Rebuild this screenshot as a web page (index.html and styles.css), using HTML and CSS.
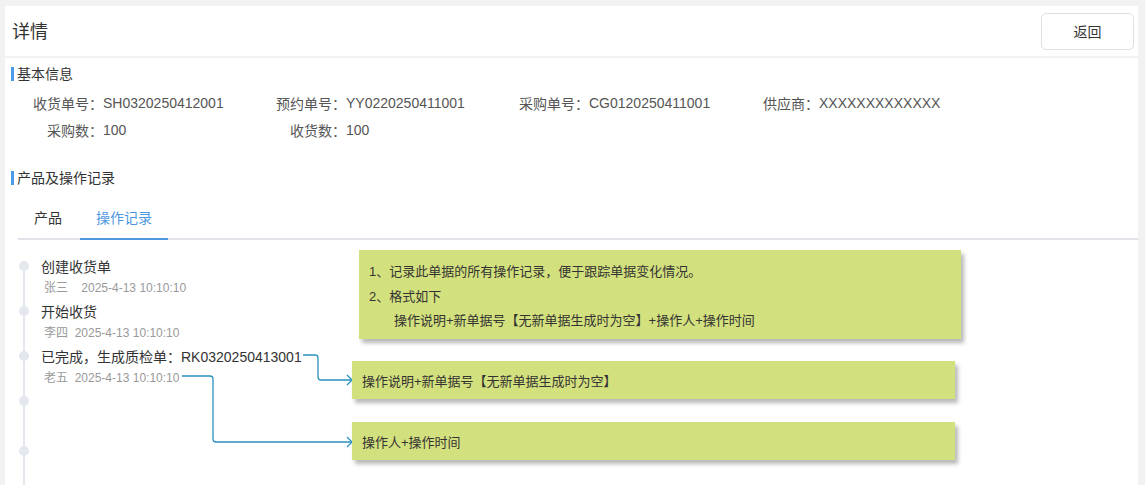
FILE: index.html
```html
<!DOCTYPE html>
<html lang="zh-CN">
<head>
    <meta charset="UTF-8">
    <title>收货单详情</title>
    <link rel="stylesheet" href="styles.css">
</head>
<body>
    <!-- Page Header -->
    <div class="page-head">
        <span class="page-title">详情</span>
        <button class="btn-back">返回</button>
    </div>

    <div class="page-body">
        <!-- Basic Info -->
        <div class="section-title">基本信息</div>
        <div class="info-grid">
            <div class="info-item"><span class="info-label">收货单号：</span>SH0320250412001</div>
            <div class="info-item"><span class="info-label">预约单号：</span>YY0220250411001</div>
            <div class="info-item"><span class="info-label">采购单号：</span>CG0120250411001</div>
            <div class="info-item info-last"><span class="info-label">供应商：</span>XXXXXXXXXXXXX</div>
            <div class="info-item"><span class="info-label">采购数：</span>100</div>
            <div class="info-item"><span class="info-label">收货数：</span>100</div>
        </div>

        <!-- Products and Records -->
        <div class="section-title section-second">产品及操作记录</div>
        <div class="tabs">
            <div class="tab">产品</div>
            <div class="tab tab-active">操作记录</div>
        </div>

        <div class="records">
            <div class="timeline">
                <div class="tl-item">
                    <div class="tl-title">创建收货单</div>
                    <div class="tl-sub">张三&nbsp;&nbsp;&nbsp;&nbsp;2025-4-13 10:10:10</div>
                </div>
                <div class="tl-item">
                    <div class="tl-title">开始收货</div>
                    <div class="tl-sub">李四&nbsp;&nbsp;2025-4-13 10:10:10</div>
                </div>
                <div class="tl-item">
                    <div class="tl-title">已完成，生成质检单：RK0320250413001</div>
                    <div class="tl-sub">老五&nbsp;&nbsp;2025-4-13 10:10:10</div>
                </div>
                <div class="tl-item tl-empty"></div>
                <div class="tl-item tl-empty"></div>
            </div>

            <!-- Annotation notes -->
            <svg class="connectors" width="340" height="220" viewBox="0 0 340 220" fill="none" stroke="#2b92bf" stroke-width="1.3">
                <path d="M285 115 H297 Q300 115 300 118 V137 Q300 140 303 140 H334" />
                <path d="M329 135 L334 140 L329 145" />
                <path d="M164 136 H192 Q195 136 195 139 V199 Q195 202 198 202 H334" />
                <path d="M329 197 L334 202 L329 207" />
            </svg>
            <div class="note note-main">
                <p>1、记录此单据的所有操作记录，便于跟踪单据变化情况。</p>
                <p>2、格式如下</p>
                <p class="note-indent">操作说明+新单据号【无新单据生成时为空】+操作人+操作时间</p>
            </div>
            <div class="note note-desc">操作说明+新单据号【无新单据生成时为空】</div>
            <div class="note note-user">操作人+操作时间</div>
        </div>
    </div>
</body>
</html>
```

FILE: styles.css
```css
/* General Page Styling */
body {
    margin: 0;
    padding: 6px 7px 0 5px;
    background-color: #f2f2f2;
    font-family: "Liberation Sans", "Noto Sans CJK SC", sans-serif;
    font-size: 14px;
    color: #333;
    height: 479px;
    overflow: hidden;
    display: flex;
    flex-direction: column;
    gap: 2px;
}

/* Header */
.page-head {
    background-color: #ffffff;
    height: 50px;
    display: flex;
    align-items: center;
    justify-content: space-between;
    padding: 0 4px 0 7px;
    flex-shrink: 0;
}

.page-title {
    font-size: 18px;
    color: #333;
    margin-top: -2px;
}

.btn-back {
    width: 93px;
    height: 37px;
    background-color: #ffffff;
    border: 1px solid #dcdfe6;
    border-radius: 5px;
    font-family: inherit;
    font-size: 14px;
    color: #333;
}

/* Body card */
.page-body {
    background-color: #ffffff;
    flex: 1;
    padding: 6px 0 0 6px;
}

.section-title {
    display: flex;
    align-items: center;
    height: 20px;
    line-height: 20px;
    color: #333;
}

.section-title::before {
    content: "";
    width: 3px;
    height: 14px;
    background-color: #4a9be8;
    margin-right: 3px;
}

.section-second {
    margin-top: 25px;
}

/* Info grid */
.info-grid {
    display: grid;
    grid-template-columns: repeat(4, 243px);
    grid-auto-rows: 27px;
    padding: 5px 0 0 20px;
    color: #555;
}

.info-item {
    display: flex;
    align-items: center;
    white-space: nowrap;
}

.info-label {
    width: 72px;
    text-align: right;
}

.info-last .info-label {
    width: auto;
    margin-left: 3px;
}

/* Tabs */
.tabs {
    display: flex;
    margin: 10px 0 0 7px;
    border-bottom: 2px solid #e1e3e8;
    gap: 2px;
}

.tab {
    padding: 0 16px;
    height: 40px;
    line-height: 40px;
    margin-bottom: -2px;
    border-bottom: 2px solid transparent;
    color: #333;
}

.tab-active {
    color: #4f97e0;
    border-bottom-color: #4f97e0;
}

/* Timeline */
.records {
    position: relative;
    margin-left: 7px;
    padding-top: 17px;
}

.timeline {
    background: linear-gradient(#e4e7ed, #e4e7ed) no-repeat 5px 4px / 2px 100%;
    min-height: 240px;
}

.tl-item {
    position: relative;
    padding-left: 23px;
    height: 45px;
}

.tl-item::before {
    content: "";
    position: absolute;
    left: 1px;
    top: 4px;
    width: 10px;
    height: 10px;
    border-radius: 50%;
    background-color: #e4e7ed;
}

.tl-empty {
    height: 50px;
}

.tl-title {
    line-height: 20px;
    color: #333;
    white-space: nowrap;
}

.tl-sub {
    line-height: 21px;
    padding: 1px 0 0 3px;
    font-size: 12px;
    color: #999;
    white-space: nowrap;
}

/* Notes */
.connectors {
    position: absolute;
    left: 0;
    top: 0;
}

.note {
    position: absolute;
    background-color: #d3e07e;
    box-shadow: 3px 4px 4px rgba(0, 0, 0, 0.28);
    font-size: 13px;
    color: #333;
}

.note p {
    margin: 0;
    line-height: 24.5px;
}

.note-main {
    left: 341px;
    top: 10px;
    width: 592px;
    height: 79px;
    padding: 10px 0 0 10px;
}

.note-indent {
    padding-left: 25px;
}

.note-desc,
.note-user {
    left: 334px;
    width: 593px;
    height: 38px;
    line-height: 42px;
    padding-left: 10px;
}

.note-desc {
    top: 121px;
}

.note-user {
    top: 182px;
}
```
